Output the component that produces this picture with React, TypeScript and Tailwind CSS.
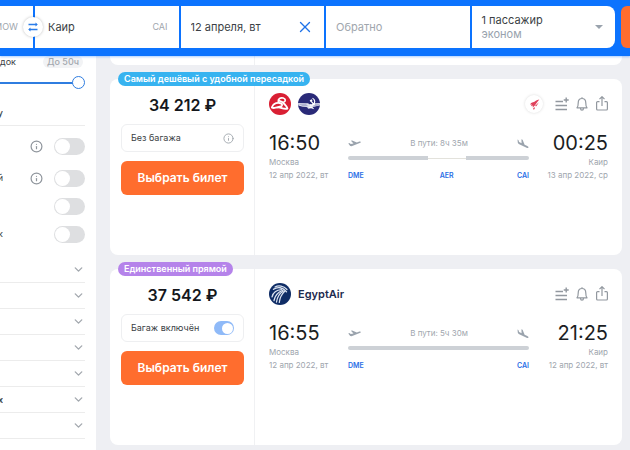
import type { ReactNode } from "react";
import { ChevronDown, Info, X } from "lucide-react";

function SwapIcon() {
  return (
    <svg viewBox="0 0 10 10" className="size-[10px]" fill="none" stroke="#2b7de9" strokeWidth="1.3">
      <path d="M.5 2.5h8M1.500 7.500h8" />
      <path d="M7.500.5 9.800 2.500 7.500 4.500z M2.500 5.500.2 7.500 2.500 9.500z" fill="#2b7de9" stroke="none" />
    </svg>
  );
}

function RedWingsLogo() {
  return (
    <svg viewBox="0 0 22 22" className="size-[22px]">
      <circle cx="11" cy="11" r="11" fill="#d91f33" />
      <g fill="none" stroke="#fff" strokeLinecap="round" strokeLinejoin="round">
        <path d="M9.300 8.500C8.800 5.800 11.500 4.200 14.200 5c2.800.9 2.600 3.300.4 4.200" strokeWidth="1.700" />
        <path d="M10.500 7.800c2.500.6 3.800 1.800 4.800 3.200 1.500 1.600 2.800 2.600 3 4.200" strokeWidth="1.900" />
        <path d="M3 14.300c1-2.800 4-4.600 7.300-4.300 2.500.3 3.400 1.700 2.500 2.800-1 1-2.800.8-3.800 1.600" strokeWidth="1.800" />
        <path d="M3 14.500c2 1.400 4-.4 6.500-.2 3 .2 5.500 2.400 8.800 1.200" strokeWidth="1.900" />
      </g>
    </svg>
  );
}

function AeroflotLogo() {
  return (
    <svg viewBox="0 0 22 22" className="size-[22px]">
      <circle cx="11" cy="11" r="11" fill="#2a2a78" />
      <path d="M.1 10 10 10.200l1.500 1h2.500l1-1 6.900-.2v2.500l-3 .5-2.500.8-2.400.2-1 1h-3l-1.500-1-4-.2L2 13l-1.700-.5z" fill="#dfe1ee" />
      <path d="M1.500 11.300h7M16.500 11.300h4.500M3.500 12.600h6M15.500 12.600h4" stroke="#2a2a78" strokeWidth=".3" />
      <path d="M14.500 5.200c2.800 1.200 3 5 .4 6.600-1 .6-2.200.5-3.200-.1M12.700 7.800l3.800 4.200" fill="none" stroke="#fff" strokeWidth="1.200" />
      <path d="m11.600 7.600 1.900-1.300 1 1.200-1.700 1.300zM9.500 15.800l2.300-2h2.500l2 2.400-3.200-1z" fill="#fff" />
    </svg>
  );
}

function EgyptAirLogo() {
  return (
    <svg viewBox="0 0 22 22" className="size-[22px]">
      <circle cx="11" cy="11" r="11" fill="#0f2d66" />
      <g fill="none" stroke="#dbe3f0" strokeLinecap="round">
        <path d="M6 4C9.500 2 14.500 2.800 18 6.500" strokeWidth="1.200" />
        <path d="M4.500 6.300C8.500 3.500 14 4.200 17.500 8.800" strokeWidth="1.400" />
        <path d="M12.500 6.700C7.500 7 4 10 3 14" strokeWidth="1.200" />
        <path d="M13.500 7.500C9 9 6 13 5 17.500" strokeWidth="1.300" />
        <path d="M14.500 8C11 10 8.300 14 7.500 19" strokeWidth="1.300" />
        <path d="M15.500 8.500C12.800 11 10.800 15 10.300 19.500" strokeWidth="1.200" />
      </g>
    </svg>
  );
}

function CarrierMark() {
  return (
    <span className="mr-3 grid size-[18px] place-items-center rounded-full bg-white shadow-[0_0_3px_rgba(0,0,0,0.15)]">
      <svg viewBox="0 0 12 12" className="size-[11px]" fill="#e0405a">
        <path d="M11.300.5C8 .8 6.500 3 4.500 3.500 3 4 1.500 4.300 1.300 6.300L3 5.800 2.200 8l2-.8L4 9.300l1.600-1.500C7.500 6.500 8 4 11.300.5z" />
        <path d="M4.500 10.200 6 8.800l.3 1.500L5.200 12zM6.500 7.500 10.800 3.500 8 8z" />
      </svg>
    </span>
  );
}

function ListPlusIcon() {
  return (
    <svg viewBox="0 0 14 14" className="size-[14px]" fill="none" stroke="#92989f" strokeWidth="1.400">
      <path d="M.5 4.500h7.500M.5 8.500h11.500M.5 12.500h11.500M11.200.5v5M8.700 3h5" />
    </svg>
  );
}

function BellIcon() {
  return (
    <svg viewBox="0 0 12 14" className="h-[14px] w-3" fill="none" stroke="#92989f" strokeWidth="1.200">
      <path d="M6 .3v1.200M1 10.800c1-.8 1.200-1.800 1.200-4.800 0-2.700 1.500-4.500 3.800-4.500S9.800 3.300 9.800 6c0 3 .2 4 1.200 4.800zM4.500 11.200c0 2.600 3 2.600 3 0" strokeLinejoin="round" />
    </svg>
  );
}

function ShareIcon() {
  return (
    <svg viewBox="0 0 12 16" className="h-4 w-3" fill="none" stroke="#92989f" strokeWidth="1.200">
      <path d="M3.500 5.600H1.600a1 1 0 0 0-1 1V13a1 1 0 0 0 1 1h8.800a1 1 0 0 0 1-1V6.600a1 1 0 0 0-1-1H8.500M6 10V.8M3.500 3.200 6 .7l2.500 2.500" strokeLinejoin="round" />
    </svg>
  );
}

function TakeoffIcon() {
  return (
    <svg viewBox="0 0 13 8" className="h-2 w-[13px]" fill="#9aa3ad">
      <path d="m.3 3.400 1-.3 1.500 1 2.700-.7L2.900.8 4.200.4l4.600 2.100 2.600-.9c.8-.2 1.400 0 1.500.4.100.4-.4.800-1.200 1.100L3.600 6.300l-1.400-.2z" />
    </svg>
  );
}

function LandingIcon() {
  return (
    <svg viewBox="0 0 12 10" className="h-[10px] w-3" fill="#9aa3ad">
      <path d="m.5.600.9.400.7 1.900 2.500 1.300L4.400.2l1.200.6 2 4.900 2.700 1.200c.9.500 1.400 1.200 1.200 1.700-.2.500-1 .5-1.900.1L1.700 4.900.8 3.700z" />
    </svg>
  );
}

function Toggle({ label, on = false }: { label: string; on?: boolean }) {
  return on ? (
    <input
      type="checkbox"
      defaultChecked
      aria-label={label}
      className="flex h-[14px] w-5 shrink-0 appearance-none items-center justify-end rounded-full bg-[#8fbaf8] px-px before:size-[11px] before:rounded-full before:bg-white"
    />
  ) : (
    <input
      type="checkbox"
      aria-label={label}
      className="flex h-[17px] w-[31px] shrink-0 appearance-none items-center rounded-full bg-[#dedfe1] px-px before:size-[15px] before:rounded-full before:bg-white"
    />
  );
}

function SearchBar() {
  return (
    <header className="relative z-10 flex h-14 shrink-0 gap-[6px] bg-[#0c73fe] pt-[6px] pb-2 text-[11px] text-[#3b3f45] shadow-[0_1px_2px_rgba(12,115,254,0.35)]">
      <form className="grid min-w-0 flex-1 grid-cols-[33px_repeat(4,minmax(0,1fr))] gap-[2px] overflow-hidden rounded-r-lg">
        <div className="flex items-center justify-end overflow-hidden bg-white pr-[15px] text-[9px] text-[#a0a6ad]">MOW</div>
        <div className="relative flex items-center bg-white pr-[11px] pl-[13px]">
          <button type="button" aria-label="Поменять местами" className="absolute -left-3 grid size-5 place-items-center rounded-full bg-white shadow-[0_0_3px_rgba(0,0,0,0.25)]">
            <SwapIcon />
          </button>
          <input aria-label="Куда" defaultValue="Каир" className="min-w-0 flex-1 outline-none" />
          <span className="text-[9px] text-[#a0a6ad]">CAI</span>
        </div>
        <div className="flex items-center bg-white px-[10px]">
          <input aria-label="Дата вылета" defaultValue="12 апреля, вт" className="min-w-0 flex-1 outline-none" />
          <button type="button" aria-label="Очистить дату"><X className="size-[18px] text-[#1f72e8]" strokeWidth={1.8} /></button>
        </div>
        <div className="flex items-center bg-white px-[10px]">
          <input aria-label="Дата возвращения" placeholder="Обратно" className="min-w-0 flex-1 outline-none placeholder:text-[#a0a6ad]" />
        </div>
        <button type="button" className="flex items-center justify-between bg-white pr-3 pl-[10px] text-left leading-[14px]">
          <span>
            1 пассажир
            <span className="block text-[#98a2ad]">эконом</span>
          </span>
          <svg viewBox="0 0 8 4" className="h-1 w-2" fill="#9aa3ad"><path d="M0 0h8L4 4z" /></svg>
        </button>
      </form>
      <button type="submit" aria-label="Найти билеты" className="w-[9px] rounded-l-md bg-[#ff6d2e]" />
    </header>
  );
}

function LabelTail({ children }: { children: string }) {
  return <span className="flex w-[3px] justify-end overflow-hidden">{children}</span>;
}

const switches = [
  { end: "", label: "Без пересадок", info: true },
  { end: "й", label: "С багажом", info: true },
  { end: "", label: "Без ночных пересадок", info: false },
  { end: "к", label: "Без виз", info: false },
];

const sections = ["", "", "", "", "", "х", ""];

function Filters() {
  return (
    <aside className="w-24 shrink-0 bg-white pr-[11px] text-[9px] leading-3 text-[#3b3f45]">
      <div className="flex items-center justify-between pr-[2px]">
        <span>док</span>
        <span className="rounded-md bg-[#f2f3f5] px-1 font-medium text-[#a3a8af]">До 50ч</span>
      </div>
      <input
        type="range"
        aria-label="Длительность пересадок"
        defaultValue={100}
        className="mt-2 block h-[13px] w-full appearance-none bg-[linear-gradient(#2f7de0,#2f7de0)] bg-[length:74px_2px] bg-[position:left_center] bg-no-repeat [&::-webkit-slider-thumb]:size-[13px] [&::-webkit-slider-thumb]:appearance-none [&::-webkit-slider-thumb]:rounded-full [&::-webkit-slider-thumb]:border [&::-webkit-slider-thumb]:border-[#2f7de0] [&::-webkit-slider-thumb]:bg-white"
      />
      <div className="mt-[18px] h-[19px] border-b border-[#ececec] font-medium"><LabelTail>у</LabelTail></div>
      <div className="mt-[6px] flex flex-col">
        {switches.map((s) => (
          <div key={s.label} className="flex h-7 items-center first:mb-1">
            <LabelTail>{s.end}</LabelTail>
            {s.info && <Info className="mr-[11px] ml-auto size-[13px] text-[#8f959c]" strokeWidth={2.2} />}
            <span className={s.info ? "flex" : "ml-auto flex"}><Toggle label={s.label} /></span>
          </div>
        ))}
      </div>
      <div className="mt-[9px]">
        {sections.map((end, i) => (
          <button key={i} type="button" aria-label="Развернуть фильтр" className="flex h-[26px] w-full items-center justify-between border-b border-[#ececec] font-semibold">
            <LabelTail>{end}</LabelTail>
            <ChevronDown className="size-[13px] text-[#a3a8ae]" strokeWidth={2.5} />
          </button>
        ))}
      </div>
    </aside>
  );
}

type TicketProps = {
  badge: string;
  badgeColor: string;
  price: string;
  baggage: ReactNode;
  carrier: ReactNode;
  mark?: ReactNode;
  depart: string;
  arrive: string;
  arriveDate: string;
  duration: string;
  stop?: string;
};

function Ticket(t: TicketProps) {
  return (
    <article className="relative flex h-44 shrink-0 rounded-lg bg-white">
      <span className={`absolute -top-[7px] left-2 rounded-full px-[6px] text-[9px] leading-[14px] font-semibold text-white ${t.badgeColor}`}>{t.badge}</span>
      <div className="flex w-[145px] shrink-0 flex-col border-r border-[#f0f1f3] pt-[14px] pr-[10px] pl-[11px]">
        <div className="text-center text-[16px] leading-6 font-semibold text-[#14171c]">{t.price}</div>
        <div className="mt-[7px] flex h-7 items-center justify-between rounded-md border border-[#eeeff1] px-[9px] text-[9px] text-[#3b3f45]">{t.baggage}</div>
        <button type="button" className="mt-[9px] h-[34px] rounded-md bg-[#ff6d2e] text-[12px] font-semibold text-white">Выбрать билет</button>
      </div>
      <div className="min-w-0 flex-1 px-[14px] pt-[14px]">
        <div className="flex h-[22px] items-center justify-between">
          <div className="flex items-center gap-[7px]">{t.carrier}</div>
          <div className="flex items-center">
            {t.mark}
            <button type="button" aria-label="Добавить в список"><ListPlusIcon /></button>
            <button type="button" aria-label="Следить за ценой" className="ml-[7px]"><BellIcon /></button>
            <button type="button" aria-label="Поделиться" className="ml-2"><ShareIcon /></button>
          </div>
        </div>
        <div className="mt-4 grid grid-cols-[64px_1fr_64px] gap-[15px] text-[8px] leading-[13px] whitespace-nowrap text-[#a0a6ae]">
          <div>
            <div className="text-[20px] leading-[25px] text-[#1b1e23]">{t.depart}</div>
            <div>Москва</div>
            <div>12 апр 2022, вт</div>
          </div>
          <div>
            <div className="flex h-[25px] items-center justify-between">
              <TakeoffIcon />
              <span>В пути: {t.duration}</span>
              <LandingIcon />
            </div>
            {t.stop ? (
              <div className="flex h-1 items-center">
                <div className="h-1 w-[44%] rounded-l-sm bg-[#cdd1d6]" />
                <div className="h-px flex-1 bg-[#e3e2dc]" />
                <div className="h-1 w-[35%] rounded-r-sm bg-[#cdd1d6]" />
              </div>
            ) : (
              <div className="h-1 rounded-sm bg-[#cdd1d6]" />
            )}
            <div className="mt-[9px] grid grid-cols-[44%_1fr_35%] text-[7px] font-semibold text-[#2b6fe6]">
              <span>DME</span>
              <span className="text-center">{t.stop}</span>
              <span className="text-right">CAI</span>
            </div>
          </div>
          <div className="flex flex-col items-end">
            <div className="text-[20px] leading-[25px] text-[#1b1e23]">{t.arrive}</div>
            <div>Каир</div>
            <div>{t.arriveDate}</div>
          </div>
        </div>
      </div>
    </article>
  );
}

export default function App() {
  return (
    <div className="flex h-screen flex-col overflow-hidden bg-[#eeeff3] font-['Inter','Liberation_Sans',sans-serif]">
      <SearchBar />
      <div className="flex min-h-0 flex-1">
        <Filters />
        <main className="flex min-w-0 flex-1 flex-col gap-[14px] pr-2 pl-[14px]">
          <div className="flex h-[9px] shrink-0 rounded-b-lg bg-white">
            <div className="w-[145px] border-r border-[#f0f1f3]" />
          </div>
          <Ticket
            badge="Самый дешёвый с удобной пересадкой"
            badgeColor="bg-[#37b3f0]"
            price="34 212 ₽"
            baggage={<><span>Без багажа</span><Info className="size-[11px] text-[#a0a6ad]" /></>}
            carrier={<><RedWingsLogo /><AeroflotLogo /></>}
            mark={<CarrierMark />}
            depart="16:50"
            arrive="00:25"
            arriveDate="13 апр 2022, ср"
            duration="8ч 35м"
            stop="AER"
          />
          <Ticket
            badge="Единственный прямой"
            badgeColor="bg-[#b583ea]"
            price="37 542 ₽"
            baggage={<><span>Багаж включён</span><Toggle label="Багаж включён" on /></>}
            carrier={<><EgyptAirLogo /><span className="text-[11px] font-semibold text-[#1d2b4f]">EgyptAir</span></>}
            depart="16:55"
            arrive="21:25"
            arriveDate="12 апр 2022, вт"
            duration="5ч 30м"
          />
        </main>
      </div>
    </div>
  );
}
